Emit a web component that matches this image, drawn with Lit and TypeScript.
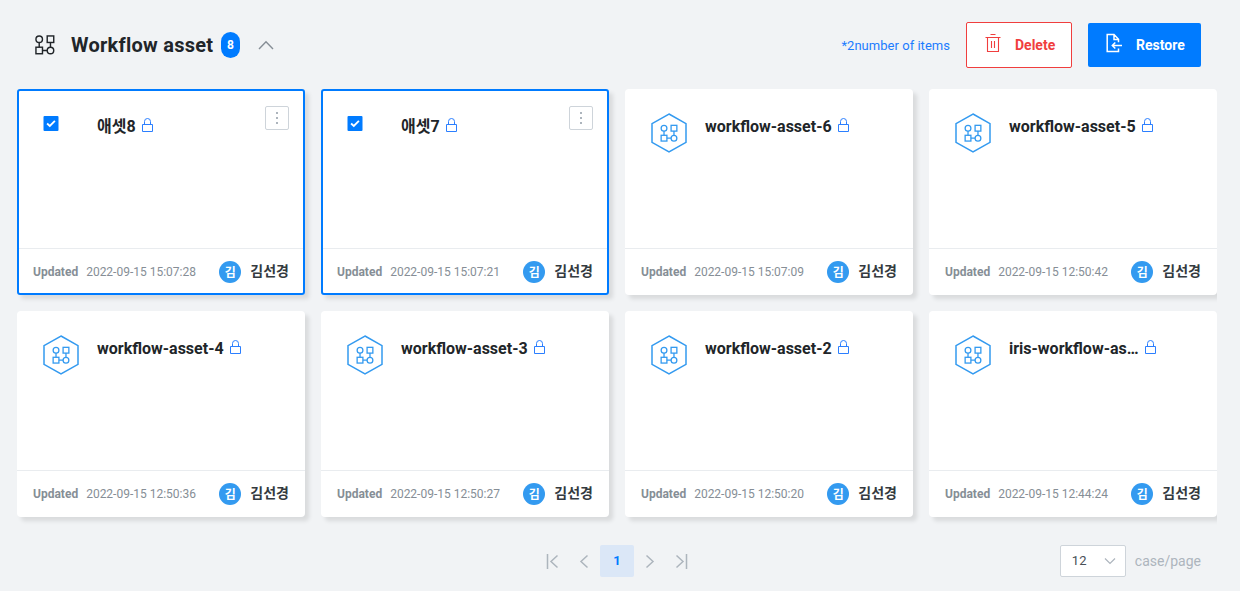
import { LitElement, html, css, svg } from "lit";
import { customElement, property } from "lit/decorators.js";
import { classMap } from "lit/directives/class-map.js";

interface Asset {
  name: string;
  updated: string;
  selected?: boolean;
}

const ASSETS: Asset[] = [
  { name: "애셋8", updated: "2022-09-15 15:07:28", selected: true },
  { name: "애셋7", updated: "2022-09-15 15:07:21", selected: true },
  { name: "workflow-asset-6", updated: "2022-09-15 15:07:09" },
  { name: "workflow-asset-5", updated: "2022-09-15 12:50:42" },
  { name: "workflow-asset-4", updated: "2022-09-15 12:50:36" },
  { name: "workflow-asset-3", updated: "2022-09-15 12:50:27" },
  { name: "workflow-asset-2", updated: "2022-09-15 12:50:20" },
  { name: "iris-workflow-as…", updated: "2022-09-15 12:44:24" },
];

const flowShapes = svg`
  <circle cx="4" cy="4" r="3.1"/>
  <rect x="11.6" y="0.9" width="6.2" height="6.2"/>
  <rect x="0.9" y="11.6" width="6.2" height="6.2"/>
  <circle cx="14.7" cy="14.7" r="3.1"/>
  <path d="M4 7.1v4.5M14.7 7.1v4.5M7.1 14.7h4.5"/>`;

@customElement("asset-card")
export class AssetCard extends LitElement {
  @property({ attribute: false }) asset!: Asset;

  static styles = css`
    :host { display: block; min-width: 0; }
    .card {
      display: flex; flex-direction: column; box-sizing: border-box; height: 206px;
      background: #fff; border-radius: 4px; box-shadow: 4px 4px 4px rgba(0, 0, 0, 0.1);
    }
    .selected { outline: 2px solid #007bff; outline-offset: -2px; border-radius: 3px; }
    .body { flex: 1; display: flex; padding: 17px 16px 0 26px; }
    .lead { width: 54px; flex: none; padding-top: 7px; }
    .hex, .check { display: block; }
    .check { margin: 3px 0 0 0; }
    .heading { flex: 1; min-width: 0; display: flex; align-items: flex-start; padding-top: 8px; }
    .name {
      font: 700 16px/24px Roboto, "Noto Sans CJK KR", sans-serif; color: #212529;
      white-space: nowrap; padding-top: 1px;
    }
    .lock { flex: none; margin: 4px 0 0 6px; }
    .menu {
      flex: none; width: 24px; height: 24px; padding: 0; box-sizing: border-box;
      border: 1px solid #ced4da; border-radius: 2px; background: #fff;
      display: flex; align-items: center; justify-content: center;
    }
    .foot {
      display: flex; align-items: center; height: 46px; border-top: 1px solid #e9ecef;
      padding: 0 16px; font: 12px/16px Roboto, sans-serif; color: #868e96; white-space: nowrap;
    }
    .label { font-weight: 700; }
    .date { margin-left: 8px; }
    .avatar {
      margin-left: auto; width: 22px; height: 22px; border-radius: 50%; background: #339af0;
      color: #fff; font: 700 12px/21px "Noto Sans CJK KR", sans-serif; text-align: center;
    }
    .user { margin-left: 9px; font: 700 14px/20px "Noto Sans CJK KR", sans-serif; color: #343a40; padding-bottom: 5px; }
  `;

  render() {
    const a = this.asset;
    return html`
      <div class=${classMap({ card: true, selected: !!a.selected })}>
        <div class="body">
          <div class="lead">
            ${a.selected
              ? html`<svg class="check" width="16" height="15" viewBox="0 0 16 15">
                  <rect x=".5" width="15" height="15" rx="1" fill="#007bff"/>
                  <path d="M4.1 7.500l2.700 2.500 5.100-5.200" fill="none" stroke="#fff" stroke-width="1.8"/>
                </svg>`
              : html`<svg class="hex" width="36" height="40" viewBox="0 0 36 40" fill="none" stroke="#339af0">
                  <path d="M18 1l17 9.600v18.800L18 39 1 29.400V10.600z" stroke-width="1.5"/>
                  <g transform="translate(9.3 11.500) scale(.93)" stroke-width="1.4">${flowShapes}</g>
                </svg>`}
          </div>
          <div class="heading">
            <span class="name">${a.name}</span>
            <svg class="lock" width="11" height="15" viewBox="0 0 11 15" fill="none" stroke="#2b7fff">
              <path d="M.5 6.500h10v7H.5zM2.500 6.500V3.500a3 3 0 0 1 6 0v3"/>
            </svg>
          </div>
          ${a.selected
            ? html`<button class="menu" aria-label="menu">
                <svg width="4" height="14" viewBox="0 0 4 14" fill="#adb5bd">
                  <rect x="1" y="1" width="2" height="2"/><rect x="1" y="6" width="2" height="2"/><rect x="1" y="11" width="2" height="2"/>
                </svg>
              </button>`
            : ""}
        </div>
        <div class="foot">
          <span class="label">Updated</span>
          <span class="date">${a.updated}</span>
          <span class="avatar">김</span>
          <span class="user">김선경</span>
        </div>
      </div>`;
  }
}

@customElement("app-root")
export class AppRoot extends LitElement {
  static styles = css`
    :host {
      display: flex; flex-direction: column; box-sizing: border-box; width: 1240px; height: 591px;
      background: #f1f3f5; font-family: Roboto, sans-serif; overflow: hidden;
    }
    .head { display: flex; align-items: center; height: 89px; box-sizing: border-box; padding: 0 39px 0 35px; }
    .title { margin: 0 0 0 16px; width: 142px; white-space: nowrap; font-size: 20px; line-height: 28px; font-weight: 700; letter-spacing: 0.26px; color: #212529; }
    .count {
      margin-left: 8px; width: 19px; height: 26px; border-radius: 10px; background: #007bff; color: #fff;
      font-size: 12px; line-height: 26px; font-weight: 700; text-align: center;
    }
    .caret { margin-left: 18px; }
    .note { margin-left: auto; padding-top: 2px; font-size: 13px; line-height: 18px; letter-spacing: 0.03px; color: #1c7cff; }
    .btn {
      display: flex; align-items: center; box-sizing: border-box; border-radius: 2px; padding: 0;
      font: 700 14px/20px Roboto, sans-serif;
    }
    .delete { margin-left: 16px; width: 106px; height: 46px; padding-left: 18px; border: 1px solid #f03e3e; color: #f03e3e; background: #fff; }
    .restore { margin-left: 16px; width: 113px; height: 44px; padding-left: 18px; border: 0; color: #fff; background: #007bff; }
    .btn svg { margin: 0 14px 4px 0; }
    .grid {
      display: grid; grid-template-columns: repeat(4, 288px); gap: 16px;
      padding-left: 17px; width: 1200px; padding-bottom: 12px; overflow: hidden;
    }
    .pager { display: grid; grid-template-columns: 1fr auto 1fr; align-items: center; height: 32px; padding: 0 39px 0 33px; margin-top: 16px; }
    .pages { grid-column: 2; display: flex; align-items: center; }
    .arrow { width: 32px; height: 32px; display: flex; align-items: center; justify-content: center; }
    .current {
      width: 34px; height: 32px; border-radius: 2px; background: #dbe7f7; color: #007bff;
      font-size: 13px; line-height: 32px; font-weight: 700; text-align: center;
    }
    .size { justify-self: end; display: flex; align-items: center; font-size: 14px; color: #adb5bd; }
    .select {
      display: flex; align-items: center; justify-content: space-between; box-sizing: border-box;
      width: 66px; height: 32px; padding: 0 9px 1px 11px; margin-right: 9px; border: 1px solid #ced4da; border-radius: 2px;
      background: #fff; color: #495057; font-size: 13px;
    }
  `;

  private arrow(d: string) {
    return html`<span class="arrow"><svg width="14" height="16" viewBox="0 0 14 16" fill="none" stroke="#adb5bd" stroke-width="1.5"><path d=${d}/></svg></span>`;
  }

  render() {
    return html`
      <header class="head">
        <svg width="20" height="20" viewBox="0 0 19 19" fill="none" stroke="#212529" stroke-width="1.35">${flowShapes}</svg>
        <h1 class="title">Workflow asset</h1>
        <span class="count">8</span>
        <svg class="caret" width="16" height="10" viewBox="0 0 16 10" fill="none" stroke="#868e96" stroke-width="1.4"><path d="M1 9l7-7.300L15 9"/></svg>
        <span class="note">*2number of items</span>
        <button class="btn delete">
          <svg width="16" height="20" viewBox="0 0 16 20" fill="none" stroke="#f03e3e" stroke-width="1.100">
            <path d="M5.500 1.500h5M.5 4.500h15M2.500 4.500v14h11v-14M6.500 8v7M9.500 8v7"/>
          </svg>
          Delete
        </button>
        <button class="btn restore">
          <svg width="16" height="20" viewBox="0 0 16 20" fill="none" stroke="#fff" stroke-width="1.500">
            <path d="M12.500 15.500v3H1.200V1.500H8l4.500 4.700v3M8 1.500v5h4.500M16 12.500H6.500M9.300 9.500l-3 3 3 3"/>
          </svg>
          Restore
        </button>
      </header>
      <main class="grid">${ASSETS.map((a) => html`<asset-card .asset=${a}></asset-card>`)}</main>
      <footer class="pager">
        <div class="pages">
          ${this.arrow("M2.500 1v15M12.500 2.500L6 8.500l6.500 6")}
          ${this.arrow("M10.500 2.500L4 8.500l6.500 6")}
          <span class="current">1</span>
          ${this.arrow("M3.500 2.500l6.500 6-6.500 6")}
          ${this.arrow("M1.500 2.500L8 8.500l-6.500 6M11.500 1v15")}
        </div>
        <div class="size">
          <span class="select">12
            <svg width="12" height="8" viewBox="0 0 12 8" fill="none" stroke="#adb5bd" stroke-width="1.2"><path d="M1 1.500l5 5 5-5"/></svg>
          </span>
          case/page
        </div>
      </footer>`;
  }
}
